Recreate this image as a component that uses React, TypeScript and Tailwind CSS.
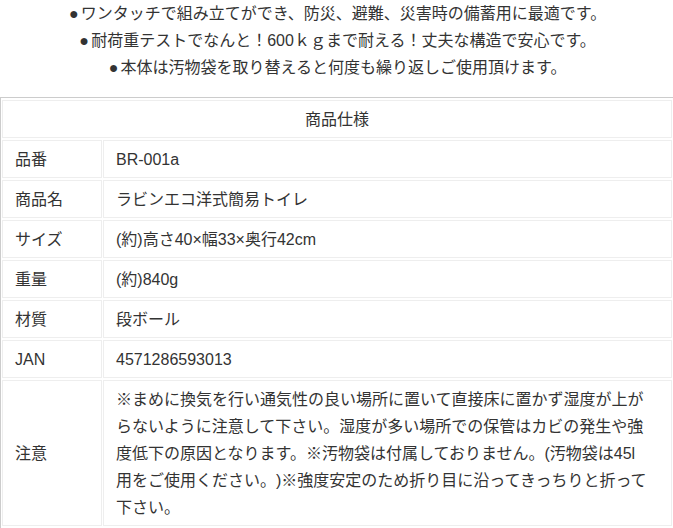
const specs: Array<{ label: string; value: string }> = [
  { label: "品番", value: "BR-001a" },
  { label: "商品名", value: "ラビンエコ洋式簡易トイレ" },
  { label: "サイズ", value: "(約)高さ40×幅33×奥行42cm" },
  { label: "重量", value: "(約)840g" },
  { label: "材質", value: "段ボール" },
  { label: "JAN", value: "4571286593013" },
]

const notes = [
  "※まめに換気を行い通気性の良い場所に置いて直接床に置かず湿度が上が",
  "らないように注意して下さい。湿度が多い場所での保管はカビの発生や強",
  "度低下の原因となります。※汚物袋は付属しておりません。(汚物袋は45l",
  "用をご使用ください。)※強度安定のため折り目に沿ってきっちりと折って",
  "下さい。",
]

const intro = [
  "ワンタッチで組み立てができ、防災、避難、災害時の備蓄用に最適です。",
  "耐荷重テストでなんと！600ｋｇまで耐える！丈夫な構造で安心です。",
  "本体は汚物袋を取り替えると何度も繰り返しご使用頂けます。",
]

export default function App() {
  return (
    <div className="w-[673px] h-[528px] overflow-hidden bg-white text-[16px] text-[#333] [text-spacing-trim:space-all] font-['Liberation_Sans','Noto_Sans_CJK_JP',sans-serif]">
      <div className="text-center leading-[27px]">
        {intro.map((t) => (
          <div key={t}>
            <span className="inline-block w-[14px] text-center">●</span>
            {t}
          </div>
        ))}
      </div>

      <table className="mt-[16px] w-[674px] table-fixed border border-[#ccc] border-separate border-spacing-x-[1px] border-spacing-y-[2px]">
        <colgroup>
          <col className="w-[100px]" />
          <col />
        </colgroup>
        <tbody>
          <tr>
            <td colSpan={2} className="border border-[#eee] px-3 py-[4.5px] leading-[27px] text-center">
              商品仕様
            </td>
          </tr>
          {specs.map((s) => (
            <tr key={s.label}>
              <td className="border border-[#eee] px-3 py-[4.5px] leading-[27px] whitespace-nowrap">{s.label}</td>
              <td className="border border-[#eee] px-3 py-[4.5px] leading-[27px]">{s.value}</td>
            </tr>
          ))}
          <tr>
            <td className="border border-[#eee] px-3 py-[4.5px] leading-[27px]">注意</td>
            <td className="border border-[#eee] px-3 py-[4.5px] leading-[27px]">
              {notes.map((line, i) => (
                <div key={i} className="whitespace-nowrap">
                  {line}
                </div>
              ))}
            </td>
          </tr>
        </tbody>
      </table>
    </div>
  )
}
